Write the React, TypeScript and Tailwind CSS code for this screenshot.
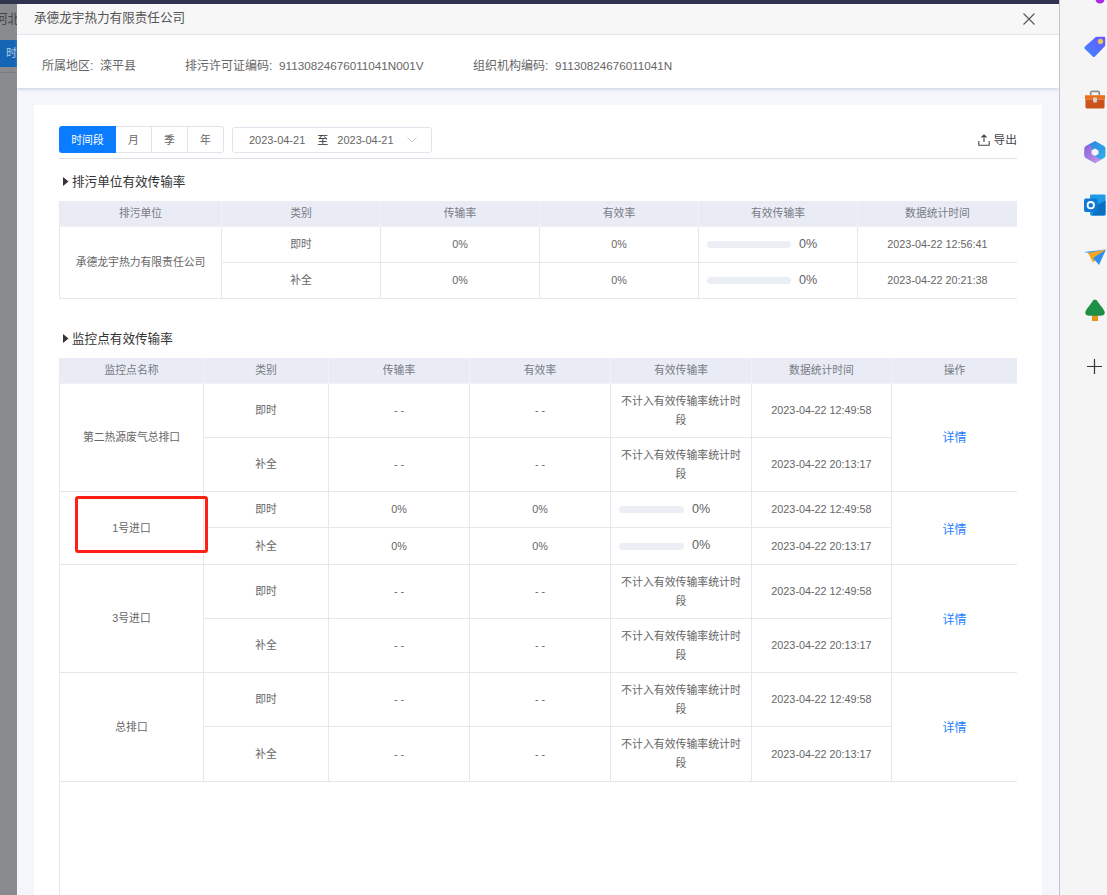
import React from "react";

const font = { fontFamily: '"Liberation Sans","Noto Sans CJK SC",sans-serif' };

function Bar({ wide }: { wide: boolean }) {
  return (
    <div className="flex items-center pl-[8px]">
      <div className={`h-[7px] rounded-full bg-[#ebeef5] ${wide ? "w-[84px]" : "w-[65px]"}`} />
      <span className="ml-[8px] -mt-[1px] text-[12.6px] leading-none text-[#606266]">0%</span>
    </div>
  );
}

const td = "border-r border-b border-[#e6e7ef] text-center align-middle font-normal p-0";
const th = "border-r border-b border-[#f0f2f7] bg-[#e9ecf4] text-center align-middle font-normal text-[#777a85] text-[10.8px] p-0";
const Note = () => (
  <div className="px-[8px] text-[10.9px] leading-[19px] text-[#666]">不计入有效传输率统计时段</div>
);

type G = { name: string; tall: boolean; rows: [string, string]; detail: string };
const groups: G[] = [
  { name: "第二热源废气总排口", tall: true, rows: ["h-[54px]", "h-[54px]"], detail: "pt-0" },
  { name: "1号进口", tall: false, rows: ["h-[36px]", "h-[37px]"], detail: "pt-[3px]" },
  { name: "3号进口", tall: true, rows: ["h-[54px]", "h-[54px]"], detail: "pt-[2px]" },
  { name: "总排口", tall: true, rows: ["h-[54px]", "h-[55px]"], detail: "pt-[1px]" },
];
const times = ["2023-04-22 12:49:58", "2023-04-22 20:13:17"];
const kinds = ["即时", "补全"];

function CompanyTable() {
  return (
    <table className="table-fixed border-separate border-spacing-0 w-[958px] text-[10.8px] text-[#666] border-l border-[#e6e7ef]">
      <colgroup>
        <col className="w-[162px]" />
        <col className="w-[159px]" />
        <col className="w-[159px]" />
        <col className="w-[159px]" />
        <col className="w-[159px]" />
        <col className="w-[159px]" />
      </colgroup>
      <thead>
        <tr className="h-[26px]">
          {["排污单位", "类别", "传输率", "有效率", "有效传输率", "数据统计时间"].map((t, i) => (
            <th key={t} className={`${th} ${i === 5 ? "border-r-0" : ""}`}>{t}</th>
          ))}
        </tr>
      </thead>
      <tbody>
        <tr className="h-[36px]">
          <td rowSpan={2} className={td}>承德龙宇热力有限责任公司</td>
          <td className={td}>即时</td>
          <td className={td}>0%</td>
          <td className={td}>0%</td>
          <td className={td}><Bar wide /></td>
          <td className={`${td} border-r-0`}>2023-04-22 12:56:41</td>
        </tr>
        <tr className="h-[36px]">
          <td className={td}>补全</td>
          <td className={td}>0%</td>
          <td className={td}>0%</td>
          <td className={td}><Bar wide /></td>
          <td className={`${td} border-r-0`}>2023-04-22 20:21:38</td>
        </tr>
      </tbody>
    </table>
  );
}

function PointTable() {
  return (
    <table className="table-fixed border-separate border-spacing-0 w-[957px] text-[10.8px] text-[#666]">
      <colgroup>
        <col className="w-[144px]" />
        <col className="w-[125px]" />
        <col className="w-[141px]" />
        <col className="w-[141px]" />
        <col className="w-[141px]" />
        <col className="w-[140px]" />
        <col className="w-[125px]" />
      </colgroup>
      <thead>
        <tr className="h-[26px]">
          {["监控点名称", "类别", "传输率", "有效率", "有效传输率", "数据统计时间", "操作"].map((t, i) => (
            <th key={t} className={`${th} ${i === 6 ? "border-r-0" : ""}`}>{t}</th>
          ))}
        </tr>
      </thead>
      <tbody>
        {groups.map((g) =>
          kinds.map((k, i) => (
            <tr key={g.name + k} className={g.rows[i]}>
              {i === 0 && <td rowSpan={2} className={td}>{g.name}</td>}
              <td className={td}>{k}</td>
              <td className={td}>{g.tall ? "- -" : "0%"}</td>
              <td className={td}>{g.tall ? "- -" : "0%"}</td>
              <td className={td}>{g.tall ? <Note /> : <Bar wide={false} />}</td>
              <td className={td}>{times[i]}</td>
              {i === 0 && (
                <td rowSpan={2} className={`${td} border-r-0 text-[#1e80ff] text-[12px]`}>
                  <div className={g.detail}>详情</div>
                </td>
              )}
            </tr>
          ))
        )}
      </tbody>
    </table>
  );
}

function SectionTitle({ children, cls }: { children: React.ReactNode; cls: string }) {
  return (
    <div className={`flex items-center text-[12.6px] leading-[18px] text-[#333] pb-[1px] ${cls}`}>
      <svg width="6" height="9" viewBox="0 0 6 9" className="ml-[4px] mr-[3px]"><path d="M0 0l5.500 4.500L0 9z" fill="#333" /></svg>
      {children}
    </div>
  );
}

function Icon({ children, cls }: { children: React.ReactNode; cls?: string }) {
  return <div className={`h-[24px] w-[22px] flex items-center justify-center ${cls ?? ""}`}>{children}</div>;
}

function Sidebar() {
  return (
    <aside className="relative w-[48px] shrink-0 border-l border-[#c4c5c8] bg-[#f5f5f5] flex flex-col items-start gap-[28.5px] pl-[24px] pt-[35px] overflow-hidden">
      <svg width="10" height="5" viewBox="0 0 10 5" className="absolute top-0 right-[2px]"><circle cx="5" cy="-1" r="4.500" fill="#a92be8" /></svg>
      <Icon>
        <svg width="22" height="22" viewBox="0 0 22 22">
          <defs><linearGradient id="t" x1="0" y1="1" x2="1" y2="0"><stop offset="0" stopColor="#3d8bff" /><stop offset="1" stopColor="#6b52ff" /></linearGradient></defs>
          <path d="M1 10.500L11.500 1.200Q12 .8 13 .8h7q1.200 0 1.200 1.200v7q0 1-.6 1.500L11 20.500q-1.200 1-2.300 0L1 13q-1.200-1.300 0-2.500z" fill="url(#t)" />
          <circle cx="16.500" cy="5.500" r="2.400" fill="#f4c93a" stroke="#d8cf90" strokeWidth=".6" />
        </svg>
      </Icon>
      <Icon>
        <svg width="23" height="20" viewBox="0 0 23 20">
          <path d="M7 5V2.500Q7 1 8.500 1h6Q16 1 16 2.500V5" fill="none" stroke="#8f8f8f" strokeWidth="1.800" />
          <path d="M1 5h21v4.500H1z" fill="#e8701f" />
          <path d="M1.500 9.500h20V17q0 2-2 2h-16q-2 0-2-2z" fill="#cc521b" />
          <rect x="9.500" y="7.500" width="4" height="5" rx="1" fill="#d9d4d0" />
        </svg>
      </Icon>
      <Icon>
        <svg width="22" height="24" viewBox="0 0 22 24">
          <defs>
            <linearGradient id="c1" x1="0" y1="0" x2="1" y2="1"><stop offset="0" stopColor="#2f7fe0" /><stop offset="1" stopColor="#2fb6e8" /></linearGradient>
            <linearGradient id="c2" x1="0" y1="0" x2="1" y2="1"><stop offset="0" stopColor="#8a5fd8" /><stop offset="1" stopColor="#c79ae8" /></linearGradient>
          </defs>
          <path d="M11 1l9 5q1.500 1 1.500 2.500v7q0 1.500-1.500 2.500l-9 5-9-5q-1.500-1-1.500-2.500v-7Q.5 7 2 6z" fill="url(#c1)" />
          <path d="M.5 9v6.500Q.5 17 2 18l9 5 6-3.300-7-4.200-2-2V7L5 4.500 2 6Q.5 7 .5 9z" fill="url(#c2)" />
          <path d="M11 8.500l3.500 2v3.500L11 16l-3.500-2v-3.500z" fill="#f5f5f5" />
        </svg>
      </Icon>
      <Icon>
        <svg width="22" height="22" viewBox="0 0 22 22">
          <path d="M6 1.500Q6 .5 7 .5h13.500q1 0 1 1V20q0 1.500-1.500 1.500H7.500Q6 21.500 6 20z" fill="#1c9ae8" />
          <path d="M13 11l8.500-4.500V20q0 1.500-1.500 1.500H7.500z" fill="#0c6ec0" />
          <rect x="0" y="4.500" width="13.500" height="13.500" rx="2" fill="#0f78d4" />
          <circle cx="6.800" cy="11.200" r="3.200" fill="none" stroke="#fff" strokeWidth="1.800" />
        </svg>
      </Icon>
      <Icon>
        <svg width="22" height="16" viewBox="0 0 22 16">
          <path d="M0 3L22 .5 7 4.500z" fill="#3b9bf5" />
          <path d="M4 4L22 .5 9 13.500z" fill="#f5a623" />
          <path d="M9 9L22 .5 15 16z" fill="#2f8ff0" />
        </svg>
      </Icon>
      <Icon>
        <svg width="22" height="22" viewBox="0 0 22 22">
          <rect x="8" y="16" width="6" height="6" fill="#e8941a" />
          <path d="M11 .5q2 0 3 2.500l2.500 3.500Q18 8 19.500 10.500q2.500 3.500 0 5.500-1 .8-3 .8h-11q-2 0-3-.8-2.500-2 0-5.500Q4 8 5.500 6.500L8 3q1-2.500 3-2.500z" fill="#1f8f45" />
        </svg>
      </Icon>
      <div className="mt-[9px] ml-[3px]">
        <svg width="15" height="15" viewBox="0 0 15 15" className="block"><path d="M7.500 0v15M0 7.500h15" stroke="#333" strokeWidth="1.200" /></svg>
      </div>
    </aside>
  );
}

export default function App() {
  return (
    <div style={font} className="relative flex h-[895px] w-[1107px] overflow-hidden bg-white">
      <div className="w-[17px] shrink-0 bg-[#8a8b8f] flex flex-col overflow-hidden">
        <div className="h-[4px] bg-[#31344f]" />
        <div className="h-[36px] whitespace-nowrap overflow-hidden text-[12.6px] leading-[30px] text-[#444] -indent-[5px]">河北</div>
        <div className="h-[27px] bg-[#1565b5] text-[10.8px] leading-[27px] pl-[6px] text-[#b9cfe6] overflow-hidden">时</div>
        <div className="mt-[5px] border-t border-[#7b7c80]" />
      </div>
      <div className="w-[1042px] shrink-0 flex flex-col">
        <div className="h-[4px] bg-[#31344f]" />
        <header className="h-[31px] bg-[#f7f7f7] border-b border-[#eceef5] flex items-center justify-between pl-[17px] pr-[24px] pb-[1px] text-[12.6px] text-[#555]">
          <span>承德龙宇热力有限责任公司</span>
          <svg width="12" height="12" viewBox="0 0 12 12"><path d="M.5.500l11 11M11.500.500l-11 11" stroke="#555" strokeWidth="1.100" /></svg>
        </header>
        <div className="h-[53px] bg-white shadow-[0_1px_3px_rgba(150,165,200,0.5)] relative flex items-center pl-[25px] text-[12px] text-[#666] pt-[8px]">
          <span className="w-[143px]">所属地区:&nbsp; 滦平县</span>
          <span className="w-[288px]">排污许可证编码:&nbsp; <span className="text-[11.7px]">91130824676011041N001V</span></span>
          <span>组织机构编码:&nbsp; <span className="text-[11.7px]">91130824676011041N</span></span>
        </div>
        <main className="flex-1 min-h-0 bg-[#f4f6fb] pt-[17px] pl-[17px] pr-[17px]">
          <div className="h-full bg-white pt-[22px] pl-[25px] pr-[25px] flex flex-col">
            <div className="h-[32px] shrink-0 border-b border-[#e0e1e6] flex items-start text-[10.8px] text-[#666]">
              <div className="flex h-[27px] w-[165px] -mt-[1px] text-center">
                <div className="w-[57px] rounded-l-[3px] bg-[#0a7cff] text-white leading-[28px]">时间段</div>
                <div className="flex-1 flex rounded-r-[3px] border border-l-0 border-[#e1e4ec]">
                  <div className="w-[36px] border-r border-[#e1e4ec] leading-[27px]">月</div>
                  <div className="w-[36px] border-r border-[#e1e4ec] leading-[27px]">季</div>
                  <div className="flex-1 leading-[27px]">年</div>
                </div>
              </div>
              <div className="ml-[8px] h-[26px] w-[200px] rounded-[3px] border border-[#e1e4ec] flex items-center pl-[16px] text-[11px]">
                <span>2023-04-21</span>
                <span className="ml-[12px] text-[#333]">至</span>
                <span className="ml-[9px]">2023-04-21</span>
                <svg width="10" height="6" viewBox="0 0 10 6" className="ml-[13px]"><path d="M.5.500L5 5 9.500.500" fill="none" stroke="#c0c4cc" strokeWidth="1" /></svg>
              </div>
              <div className="ml-auto flex items-center h-[26px] text-[11.7px] text-[#444]">
                <svg width="12" height="12" viewBox="0 0 12 12" className="mr-[4px]"><path d="M6 8V1M3.500 3.500L6 1l2.500 2.500M.8 7v4.200h10.400V7" fill="none" stroke="#444" strokeWidth="1.100" /></svg>
                导出
              </div>
            </div>
            <SectionTitle cls="mt-[14px] h-[18px]">排污单位有效传输率</SectionTitle>
            <div className="mt-[10px] shrink-0"><CompanyTable /></div>
            <SectionTitle cls="mt-[31px] h-[18px]">监控点有效传输率</SectionTitle>
            <div className="mt-[10px] flex-1 border-l border-[#e6e7ef] overflow-hidden"><PointTable /></div>
          </div>
        </main>
      </div>
      <Sidebar />
      <div className="absolute left-[75px] top-[496px] h-[57px] w-[133px] rounded-[3px] border-[3px] border-[#ff2015]" />
    </div>
  );
}
